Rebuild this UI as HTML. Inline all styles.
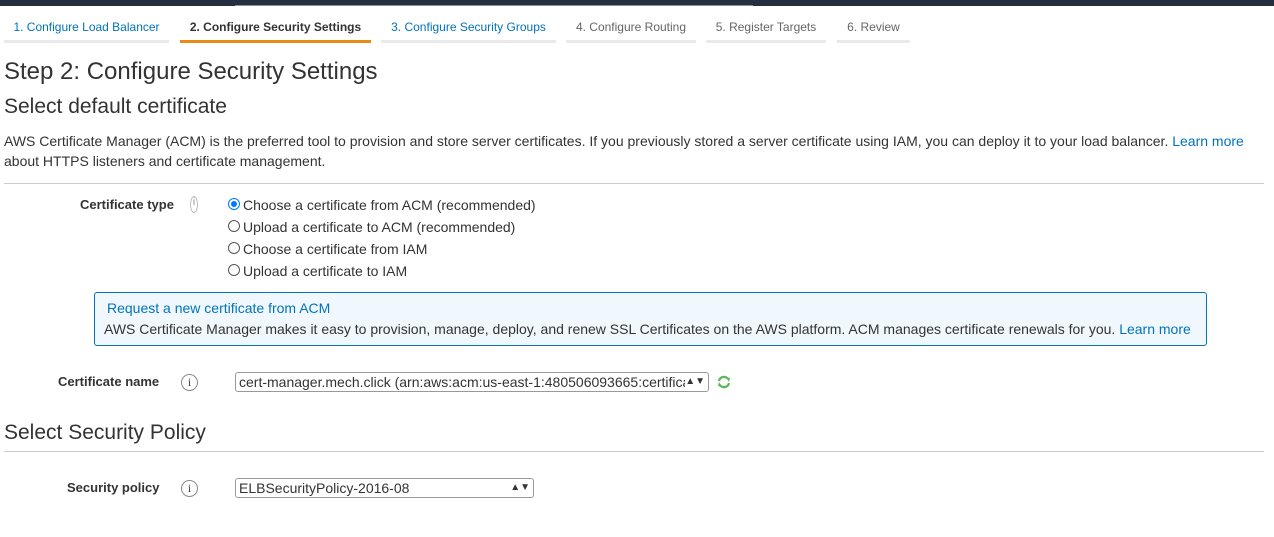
<!DOCTYPE html>
<html><head><meta charset="utf-8"><style>
*{margin:0;padding:0;box-sizing:border-box}
body{width:1274px;height:537px;background:#fff;font-family:"Liberation Sans",Arial,sans-serif;color:#333;position:relative;overflow:hidden;font-size:14px}
.a{position:absolute;white-space:nowrap}
.tab{position:absolute;top:12px;height:31px;border-bottom:3px solid #eaeaea;font-size:12px;color:#0073bb;text-align:center;line-height:30px}
.blue{color:#0073bb}
.lbl{font-weight:bold;font-size:13px;color:#333}
.radio{position:absolute;width:12px;height:12px;border:1px solid #555;border-radius:50%;background:#fff}
.info{position:absolute;width:17px;height:17px;border:1px solid #888;border-radius:50%;font-size:12px;line-height:15px;text-align:center;color:#444;font-family:"Liberation Serif",serif}
.sel{position:absolute;border:1px solid #999;border-radius:3px;background:#fff;font-size:14px;line-height:18px;padding-left:3px;color:#333;overflow:hidden}
</style></head><body>
<div class="a" style="left:0;top:0;width:1274px;height:6px;background:#232f3e"></div>
<div class="a" style="left:235px;top:5px;width:518px;height:1px;background:#8a929c"></div>

<div class="tab" style="left:4px;width:165px">1. Configure Load Balancer</div>
<div class="tab" style="left:180px;width:191px;border-bottom-color:#ec8a18;color:#333;font-weight:bold">2. Configure Security Settings</div>
<div class="tab" style="left:381px;width:175px">3. Configure Security Groups</div>
<div class="tab" style="left:566px;width:130px;color:#666">4. Configure Routing</div>
<div class="tab" style="left:706px;width:120px;color:#666">5. Register Targets</div>
<div class="tab" style="left:837px;width:73px;color:#666">6. Review</div>

<div class="a" style="left:4px;top:58px;font-size:24px;color:#333">Step 2: Configure Security Settings</div>
<div class="a" style="left:4px;top:95px;font-size:21px;color:#333">Select default certificate</div>
<div class="a" style="left:4px;top:131px;font-size:14px;line-height:20px">AWS Certificate Manager (ACM) is the preferred tool to provision and store server certificates. If you previously stored a server certificate using IAM, you can deploy it to your load balancer. <span class="blue">Learn more</span><br>about HTTPS listeners and certificate management.</div>
<div class="a" style="left:4px;top:183px;width:1260px;height:1px;background:#ccc"></div>

<div class="a lbl" style="left:80px;top:197px">Certificate type</div>
<div class="a" style="left:190px;top:196px;width:8px;height:17px;border:1px solid #bbb;border-radius:50%;font-size:10px;text-align:center;color:#888">i</div>
<div class="radio" style="left:228px;top:198px;border-color:#0075ff"><div style="position:absolute;left:2px;top:2px;width:6px;height:6px;border-radius:50%;background:#0075ff"></div></div>
<div class="a" style="left:243px;top:197px">Choose a certificate from ACM (recommended)</div>
<div class="radio" style="left:228px;top:220px"></div>
<div class="a" style="left:243px;top:219px">Upload a certificate to ACM (recommended)</div>
<div class="radio" style="left:228px;top:242px"></div>
<div class="a" style="left:243px;top:241px">Choose a certificate from IAM</div>
<div class="radio" style="left:228px;top:264px"></div>
<div class="a" style="left:243px;top:263px">Upload a certificate to IAM</div>

<div class="a" style="left:94px;top:292px;width:1113px;height:54px;border:1px solid #0073bb;border-radius:3px;background:#f1f8fd"></div>
<div class="a blue" style="left:107px;top:300px">Request a new certificate from ACM</div>
<div class="a" style="left:104px;top:321px">AWS Certificate Manager makes it easy to provision, manage, deploy, and renew SSL Certificates on the AWS platform. ACM manages certificate renewals for you. <span class="blue">Learn more</span></div>

<div class="a lbl" style="left:58px;top:374px">Certificate name</div>
<div class="info" style="left:181px;top:374px">i</div>
<div class="sel" style="left:235px;top:372px;width:474px;height:20px">cert-manager.mech.click (arn:aws:acm:us-east-1:480506093665:certifica<span style="position:absolute;right:3px;top:0;font-size:10px;background:#fff">▲▼</span></div>
<svg class="a" style="left:716px;top:374px" width="16" height="16" viewBox="0 0 16 16"><path d="M3 7a5 5 0 0 1 9-2" stroke="#5cb85c" stroke-width="2.2" fill="none"/><path d="M10 3l4 1-1 4z" fill="#5cb85c"/><path d="M13 9a5 5 0 0 1-9 2" stroke="#5cb85c" stroke-width="2.2" fill="none"/><path d="M6 13l-4-1 1-4z" fill="#5cb85c"/></svg>

<div class="a" style="left:4px;top:421px;font-size:21px;color:#333">Select Security Policy</div>
<div class="a" style="left:4px;top:451px;width:1260px;height:1px;background:#ccc"></div>

<div class="a lbl" style="left:67px;top:480px">Security policy</div>
<div class="info" style="left:181px;top:480px">i</div>
<div class="sel" style="left:235px;top:478px;width:299px;height:20px">ELBSecurityPolicy-2016-08<span style="position:absolute;right:3px;top:0;font-size:10px;background:#fff">▲▼</span></div>
</body></html>
